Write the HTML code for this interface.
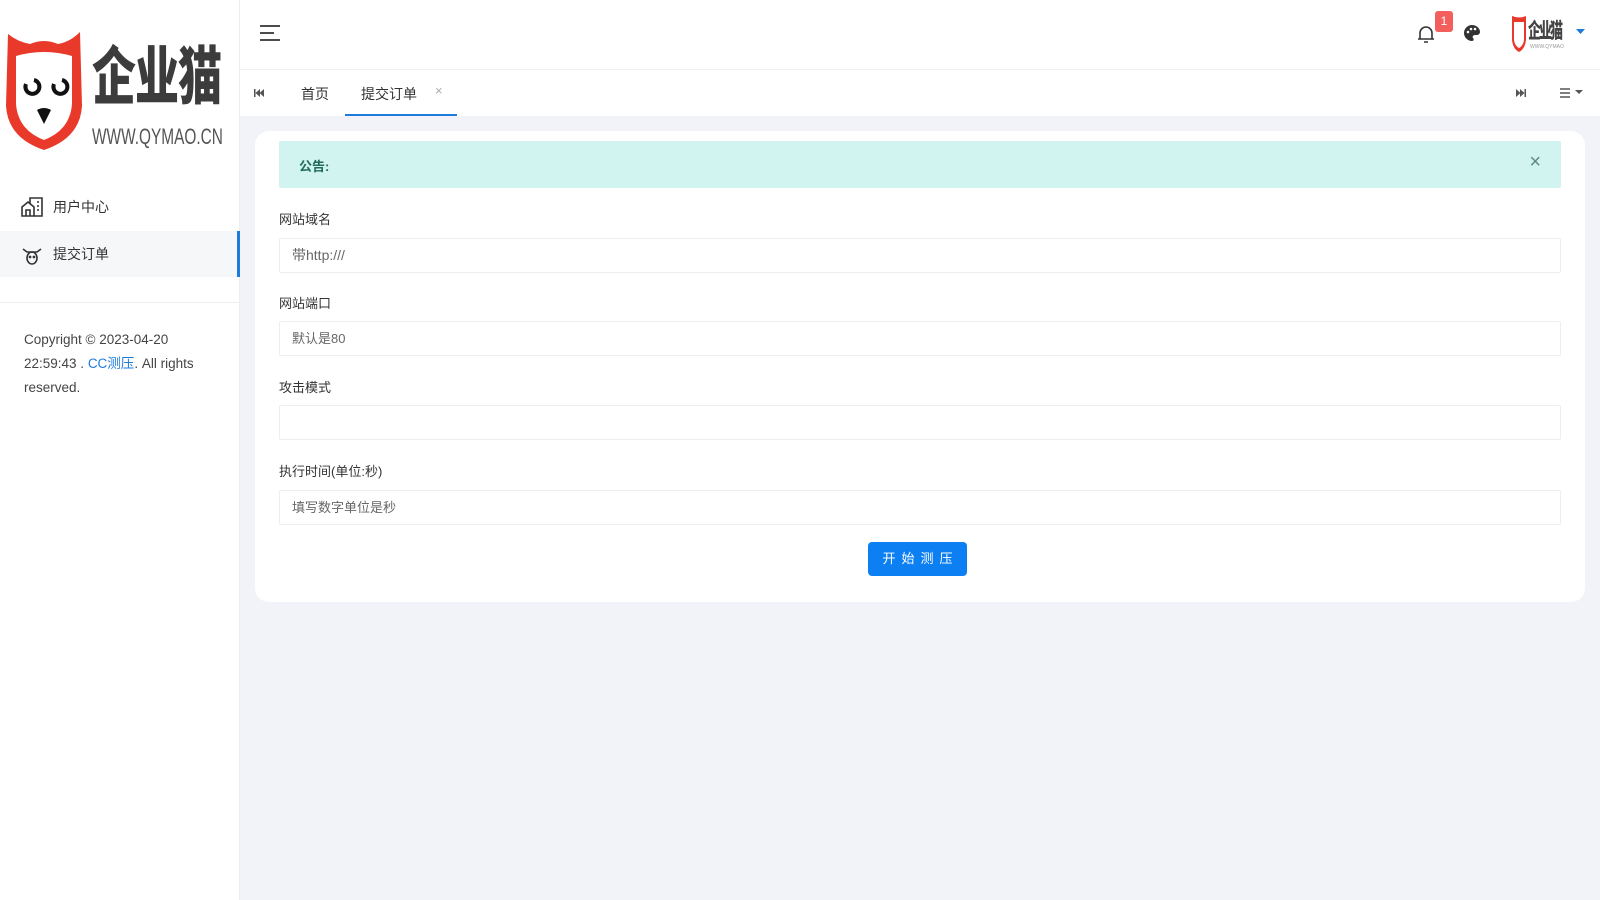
<!DOCTYPE html>
<html><head><meta charset="utf-8"><style>
*{box-sizing:border-box;margin:0;padding:0}
body{width:1600px;height:900px;background:#f2f3f8;font-family:"Liberation Sans","Noto Sans CJK SC",sans-serif;font-size:14px;color:#333;position:relative;overflow:hidden}
.side{position:absolute;left:0;top:0;width:240px;height:900px;background:#fff;border-right:1px solid #eee}
.hdr{position:absolute;left:240px;top:0;right:0;height:70px;background:#fff;border-bottom:1px solid #f0f0f0}
.tabs{position:absolute;left:240px;top:70px;right:0;height:46px;background:#fff}
.card{position:absolute;left:255px;top:131px;width:1330px;height:471px;background:#fff;border-radius:14px}
.lbl{position:absolute;left:279px;font-size:13px;color:#333}
.inp{position:absolute;left:279px;width:1282px;height:35px;border:1px solid #eceef2;border-radius:2px;padding-left:12px;line-height:33px;font-size:13px;color:#666}
</style></head><body>
<div class="side">
 <svg style="position:absolute;left:4px;top:26px" width="80" height="128" viewBox="0 0 80 128">
  <path d="M4 8 Q14 16 26 18 Q40 12 54 18 Q66 16 76 6 L78 80 Q76 112 40 124 Q4 112 2 80 Z" fill="#e8392b"/>
  <path d="M12 30 Q40 22 68 30 L68 78 Q66 104 40 114 Q14 104 12 78 Z" fill="#fff"/>
  <path d="M22 58 a7 7 0 1 0 8 -4" fill="none" stroke="#111" stroke-width="4"/>
  <path d="M50 58 a7 7 0 1 0 8 -4" fill="none" stroke="#111" stroke-width="4"/>
  <path d="M33 84 Q40 80 47 84 L40 98 Z" fill="#111"/>
 </svg>
 <div style="position:absolute;left:92px;top:28px;font-size:44px;font-weight:900;color:#3c3c3c;letter-spacing:-1px;line-height:60px;white-space:nowrap;transform:scale(1,1.45);transform-origin:left top;font-family:'Noto Sans CJK SC',sans-serif">企业猫</div>
 <div style="position:absolute;left:92px;top:124px;font-size:22px;color:#555;white-space:nowrap;transform:scaleX(.7);transform-origin:left">WWW.QYMAO.CN</div>
 <svg style="position:absolute;left:21px;top:197px" width="22" height="20" viewBox="0 0 22 20" fill="none" stroke="#333" stroke-width="1.6"><path d="M1 10 L7 5 L13 10 V19 H1 Z"/><path d="M5 19 V13 H9 V19"/><path d="M9 7 V1 H21 V19 H13"/><path d="M16 5h2M16 9h2M16 13h2"/></svg>
 <div style="position:absolute;left:53px;top:197px;font-size:14px">用户中心</div>
 <div style="position:absolute;left:0;top:231px;width:240px;height:46px;background:#f6f7f9;border-right:3px solid #1e7bdc"></div>
 <svg style="position:absolute;left:22px;top:247px" width="20" height="18" viewBox="0 0 20 18" fill="none" stroke="#333" stroke-width="1.6"><path d="M1 2 L5 5 H15 L19 2"/><ellipse cx="10" cy="11" rx="5" ry="6"/><circle cx="8" cy="10" r=".6"/><circle cx="12" cy="10" r=".6"/></svg>
 <div style="position:absolute;left:53px;top:244px;font-size:14px">提交订单</div>
 <div style="position:absolute;left:0;top:302px;width:240px;border-top:1px solid #eee"></div>
 <div style="position:absolute;left:24px;top:328px;width:200px;font-size:13.5px;line-height:24px;color:#444">Copyright © 2023-04-20 22:59:43 . <span style="color:#1e7bdc">CC测压</span>. All rights reserved.</div>
</div>
<div class="hdr">
 <svg style="position:absolute;left:20px;top:25px" width="20" height="16" viewBox="0 0 20 16" stroke="#333" stroke-width="1.8"><path d="M0 1h20M0 8h14M0 15h20"/></svg>
 <svg style="position:absolute;left:1177px;top:24px" width="18" height="20" viewBox="0 0 18 20" fill="none" stroke="#333" stroke-width="1.6"><path d="M3 15 V9 a6 6 0 0 1 12 0 V15 Z M1 15h16 M7 18h4"/></svg>
 <div style="position:absolute;left:1195px;top:11px;width:18px;height:21px;background:#f25f5c;border-radius:3px;color:#fff;font-size:12px;text-align:center;line-height:20px">1</div>
 <svg style="position:absolute;left:1223px;top:24px" width="18" height="18" viewBox="0 0 18 18"><path d="M9 1 a8 8 0 0 0 0 16 c2 0 2-2 1-3 c-1-1 0-3 2-3 h2 a3 3 0 0 0 3-3 C17 4 13 1 9 1Z" fill="#333"/><circle cx="5" cy="8" r="1.3" fill="#fff"/><circle cx="8" cy="5" r="1.3" fill="#fff"/><circle cx="12" cy="5" r="1.3" fill="#fff"/></svg>
 <svg style="position:absolute;left:1271px;top:14px" width="16" height="40" viewBox="0 0 16 40"><path d="M1 2 Q8 5 15 2 L15 26 Q14 35 8 38 Q2 35 1 26Z" fill="#e8392b"/><path d="M3 8 h10 V26 Q12 32 8 34 Q4 32 3 26Z" fill="#fff"/></svg>
 <div style="position:absolute;left:1288px;top:14px;font-size:13px;font-weight:900;color:#444;letter-spacing:-2px;white-space:nowrap;transform:scale(1,1.6);transform-origin:left top;font-family:'Noto Sans CJK SC',sans-serif">企业猫</div>
 <div style="position:absolute;left:1290px;top:44px;font-size:5px;color:#999">WWW.QYMAO</div>
 <svg style="position:absolute;left:1336px;top:29px" width="9" height="6"><path d="M0 0h9L4.5 5z" fill="#1e7bdc"/></svg>
</div>
<div class="tabs">
 <svg style="position:absolute;left:14px;top:19px" width="10" height="8" viewBox="0 0 10 8" fill="#555"><path d="M0 0h1.5v8H0zM6 0v8L1.5 4zM10 0v8L5.5 4z"/></svg>
 <div style="position:absolute;left:61px;top:14px;font-size:14px">首页</div>
 <div style="position:absolute;left:105px;top:0;width:112px;height:46px;border-bottom:2px solid #1e7bdc"></div>
 <div style="position:absolute;left:121px;top:14px;font-size:14px">提交订单</div>
 <div style="position:absolute;left:195px;top:13px;font-size:13px;color:#aaa">×</div>
 <svg style="position:absolute;left:1276px;top:19px" width="10" height="8" viewBox="0 0 10 8" fill="#555"><path d="M10 0h-1.5v8H10zM4 0v8L8.5 4zM0 0v8L4.5 4z"/></svg>
 <svg style="position:absolute;left:1320px;top:18px" width="26" height="10"><path d="M0 1h10M0 5h10M0 9h10" stroke="#555" stroke-width="1.5"/><path d="M15 2h8l-4 4z" fill="#555"/></svg>
</div>
<div class="card"></div>
<div style="position:absolute;left:279px;top:141px;width:1282px;height:47px;background:#d2f4f0;border-radius:2px">
 <div style="position:absolute;left:20px;top:15px;font-size:13px;font-weight:bold;color:#216b5e">公告:</div>
 <div style="position:absolute;right:20px;top:10px;font-size:20px;color:#5c8a85">×</div>
</div>
<div class="lbl" style="top:209px">网站域名</div>
<div class="inp" style="top:238px;font-size:14px">带http:///</div>
<div class="lbl" style="top:293px">网站端口</div>
<div class="inp" style="top:321px">默认是80</div>
<div class="lbl" style="top:377px">攻击模式</div>
<div class="inp" style="top:405px"></div>
<div class="lbl" style="top:461px">执行时间(单位:秒)</div>
<div class="inp" style="top:490px">填写数字单位是秒</div>
<div style="position:absolute;left:868px;top:542px;width:99px;height:34px;background:#0c7ff2;border-radius:4px;color:#fff;font-size:13px;text-align:center;line-height:34px;letter-spacing:6px;padding-left:6px">开始测压</div>
</body></html>
